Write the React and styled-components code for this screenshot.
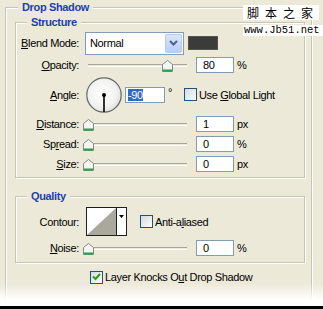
import styled, { createGlobalStyle } from "styled-components";

const GlobalStyle = createGlobalStyle`
  html, body {
    margin: 0;
    padding: 0;
  }
  body {
    background: #ece9d8;
    font-family: "Liberation Sans", Arial, sans-serif;
    font-size: 11px;
    letter-spacing: -0.35px;
    color: #000;
  }
`;

const Page = styled.div`
  position: relative;
  width: 323px;
  height: 309px;
  overflow: hidden;
  background: #ece9d8;
`;

const OuterBox = styled.fieldset`
  box-sizing: border-box;
  width: 307px;
  height: 330px;
  min-width: 0;
  margin: 1px 0 0 5px;
  padding: 2px 6px 0 9px;
  border: 1px solid #c6c4b3;
  box-shadow: inset 1px 1px 0 #fff, 1px 1px 0 #fff;
`;

const SubBox = styled.fieldset`
  box-sizing: border-box;
  width: 290px;
  min-width: 0;
  margin: ${(p) => (p.$gap ? `${p.$gap}px 0 0 0` : "0")};
  padding: 3px 0 4px 0;
  border: 1px solid #c6c4b3;
  box-shadow: inset 1px 1px 0 #fff, 1px 1px 0 #fff;
`;

const Title = styled.legend`
  margin-left: ${(p) => (p.$outer ? 3 : 11)}px;
  padding: 0 4px;
  line-height: ${(p) => (p.$outer ? 13 : 12)}px;
  font-weight: bold;
  color: #1d3fae;
  background: #ece9d8;
`;

const Row = styled.div`
  display: flex;
  align-items: center;
  height: ${(p) => p.$h}px;
  padding-left: ${(p) => p.$indent || 0}px;
  margin-top: ${(p) => p.$mt || 0}px;
`;

const Label = styled.span`
  flex: none;
  width: 63px;
  margin-right: 6px;
  text-align: right;
  white-space: nowrap;
`;

const Key = styled.span`
  text-decoration: underline;
`;

const SelectBox = styled.div`
  box-sizing: border-box;
  display: flex;
  align-items: stretch;
  width: 99px;
  height: 23px;
  padding: 1px;
  border: 1px solid #7f9db9;
  background: #fff;
`;

const SelectValue = styled.div`
  flex: 1;
  padding-left: 3px;
  line-height: 19px;
`;

const DropButton = styled.div`
  box-sizing: border-box;
  width: 17px;
  display: flex;
  align-items: center;
  justify-content: center;
  border: 1px solid #b7caf2;
  border-radius: 2px;
  background: linear-gradient(#d9e5fd, #b8cdf9);
`;

const Swatch = styled.div`
  box-sizing: border-box;
  width: 30px;
  height: 14px;
  margin-left: 4px;
  background: #3b3b39;
  border: 1px solid #555452;
`;

const NumBox = styled.div`
  box-sizing: border-box;
  flex: none;
  width: ${(p) => p.$w || 38}px;
  height: 16px;
  margin-left: ${(p) => p.$ml ?? 8}px;
  padding-left: ${(p) => p.$pl ?? 6}px;
  border: 1px solid #7f9db9;
  background: #fff;
  line-height: 14px;
`;

const Selected = styled.span`
  background: #316ac5;
  color: #fff;
`;

const Unit = styled.span`
  margin-left: 3px;
`;

const Degree = styled.span`
  box-sizing: border-box;
  width: 19px;
  padding-left: 3px;
  align-self: flex-start;
  margin-top: 12px;
`;

const SliderWrap = styled.div`
  position: relative;
  flex: none;
  width: 105px;
  height: 14px;
  margin-left: -2px;
`;

const Track = styled.div`
  width: 99px;
  height: 1px;
  margin: 6px 0 0 5px;
  border-top: 1px solid #a7a595;
  border-bottom: 1px solid #fff;
`;

const ThumbHolder = styled.div`
  position: absolute;
  top: 2px;
  width: 11px;
  height: 12px;
  line-height: 0;
`;

const Check = styled.span`
  box-sizing: border-box;
  flex: none;
  display: inline-flex;
  align-items: center;
  justify-content: center;
  width: 13px;
  height: 13px;
  margin-left: ${(p) => p.$ml || 0}px;
  border: 1px solid #1c5180;
  background: linear-gradient(135deg, #d8dae0, #fbfbf8);
`;

const CheckText = styled.span`
  margin-left: 2px;
  white-space: nowrap;
`;

const Dial = styled.div`
  flex: none;
  width: 36px;
  height: 36px;
  margin-left: 1px;
  line-height: 0;
`;

const ContourBox = styled.div`
  box-sizing: border-box;
  display: flex;
  width: 41px;
  height: 29px;
  margin-left: 1px;
  border: 1px solid #1f1f1f;
  background: #fff;
`;

const ContourGraph = styled.div`
  width: 29px;
  height: 27px;
  line-height: 0;
`;

const ContourArrow = styled.div`
  flex: 1;
  display: flex;
  justify-content: center;
  padding-top: 7px;
  border-left: 1px solid #1f1f1f;
  line-height: 0;
`;

const Watermark = styled.div`
  position: absolute;
  top: 5px;
  left: 243px;
  right: 0;
  display: flex;
  flex-direction: column;
  align-items: flex-start;
  gap: 5px;
  letter-spacing: 0;
`;

const MarkCn = styled.div`
  padding: 0 0 0 4px;
  background: #fff;
  font-family: "Noto Sans CJK SC", sans-serif;
  font-size: 12px;
  line-height: 15px;
  letter-spacing: 6px;
`;

const MarkUrl = styled.div`
  align-self: stretch;
  padding-left: 1px;
  background: #fff;
  font-family: "Liberation Mono", monospace;
  font-size: 10.5px;
  line-height: 11px;
`;

const Fade = styled.div`
  position: absolute;
  left: 0;
  right: 0;
  top: 283px;
  height: 23px;
  background: linear-gradient(rgba(236, 233, 216, 0), #fff 75%);
`;

const BottomEdge = styled.div`
  position: absolute;
  left: 0;
  right: 0;
  top: 306px;
  height: 3px;
  background: #000;
`;

const Thumb = () => (
  <svg width="11" height="12" viewBox="0 0 11 12">
    <path d="M0.5 11.5V4.5L5.5 0.5L10.5 4.5V11.5Z" fill="#f4f4f0" stroke="#7f8c82" />
    <path d="M1 10.5H10" stroke="#25a24c" strokeWidth="2" />
  </svg>
);

const Slider = ({ pos }) => (
  <SliderWrap>
    <Track />
    <ThumbHolder style={{ left: `${5 + pos * 0.99 - 5.5}px` }}>
      <Thumb />
    </ThumbHolder>
  </SliderWrap>
);

const SliderRow = ({ h, label, pos, value, unit }) => (
  <Row $h={h}>
    <Label>{label}</Label>
    <Slider pos={pos} />
    <NumBox>{value}</NumBox>
    <Unit>{unit}</Unit>
  </Row>
);

const Chevron = () => (
  <svg width="9" height="6" viewBox="0 0 9 6">
    <path d="M1 1L4.5 4.5L8 1" fill="none" stroke="#4d6185" strokeWidth="2" />
  </svg>
);

const Tick = () => (
  <svg width="9" height="8" viewBox="0 0 9 8">
    <path d="M1 3.5L3.5 6L8 1" fill="none" stroke="#21a121" strokeWidth="2" />
  </svg>
);

const AngleDial = () => (
  <svg width="36" height="36" viewBox="0 0 36 36">
    <defs>
      <radialGradient id="dialFill" cx="0.45" cy="0.45" r="0.6">
        <stop offset="0" stopColor="#ffffff" />
        <stop offset="0.7" stopColor="#f1f1ef" />
        <stop offset="1" stopColor="#d9d9d6" />
      </radialGradient>
    </defs>
    <circle cx="18" cy="18" r="17.2" fill="url(#dialFill)" stroke="#666666" strokeWidth="1.2" />
    <line x1="18" y1="18" x2="18" y2="35" stroke="#000" strokeWidth="1.6" />
    <circle cx="18" cy="18" r="2" fill="#000" />
  </svg>
);

const App = () => {
  return (
    <Page>
      <GlobalStyle />
      <OuterBox>
        <Title $outer>Drop Shadow</Title>
        <SubBox>
          <Title>Structure</Title>
          <Row $h={24}>
            <Label>
              <Key>B</Key>lend Mode:
            </Label>
            <SelectBox>
              <SelectValue>Normal</SelectValue>
              <DropButton>
                <Chevron />
              </DropButton>
            </SelectBox>
            <Swatch />
          </Row>
          <SliderRow
            h={19}
            label={<><Key>O</Key>pacity:</>}
            pos={80}
            value="80"
            unit="%"
          />
          <Row $h={41}>
            <Label>
              <Key>A</Key>ngle:
            </Label>
            <Dial>
              <AngleDial />
            </Dial>
            <NumBox $w={40} $ml={3} $pl={2}>
              <Selected>-90</Selected>
            </NumBox>
            <Degree>°</Degree>
            <Check />
            <CheckText>
              Use <Key>G</Key>lobal Light
            </CheckText>
          </Row>
          <SliderRow
            h={18}
            label={<><Key>D</Key>istance:</>}
            pos={0}
            value="1"
            unit="px"
          />
          <SliderRow
            h={22}
            label={<>Sp<Key>r</Key>ead:</>}
            pos={0}
            value="0"
            unit="%"
          />
          <SliderRow
            h={18}
            label={<><Key>S</Key>ize:</>}
            pos={0}
            value="0"
            unit="px"
          />
        </SubBox>

        <SubBox $gap={12}>
          <Title>Quality</Title>
          <Row $h={33}>
            <Label>Contour:</Label>
            <ContourBox>
              <ContourGraph>
                <svg width="29" height="27" viewBox="0 0 29 27">
                  <polygon points="0,27 29,0 29,27" fill="#aaa79c" />
                </svg>
              </ContourGraph>
              <ContourArrow>
                <svg width="5" height="3" viewBox="0 0 5 3">
                  <polygon points="0,0 5,0 2.5,3" fill="#000" />
                </svg>
              </ContourArrow>
            </ContourBox>
            <Check $ml={13} />
            <CheckText>
              Anti-a<Key>l</Key>iased
            </CheckText>
          </Row>
          <SliderRow
            h={20}
            label={<><Key>N</Key>oise:</>}
            pos={0}
            value="0"
            unit="%"
          />
        </SubBox>

        <Row $h={16} $indent={75} $mt={6}>
          <Check>
            <Tick />
          </Check>
          <CheckText>
            Layer Knocks O<Key>u</Key>t Drop Shadow
          </CheckText>
        </Row>
      </OuterBox>

      <Watermark>
        <MarkCn>脚本之家</MarkCn>
        <MarkUrl>www.Jb51.net</MarkUrl>
      </Watermark>
      <Fade />
      <BottomEdge />
    </Page>
  );
};

export default App;
